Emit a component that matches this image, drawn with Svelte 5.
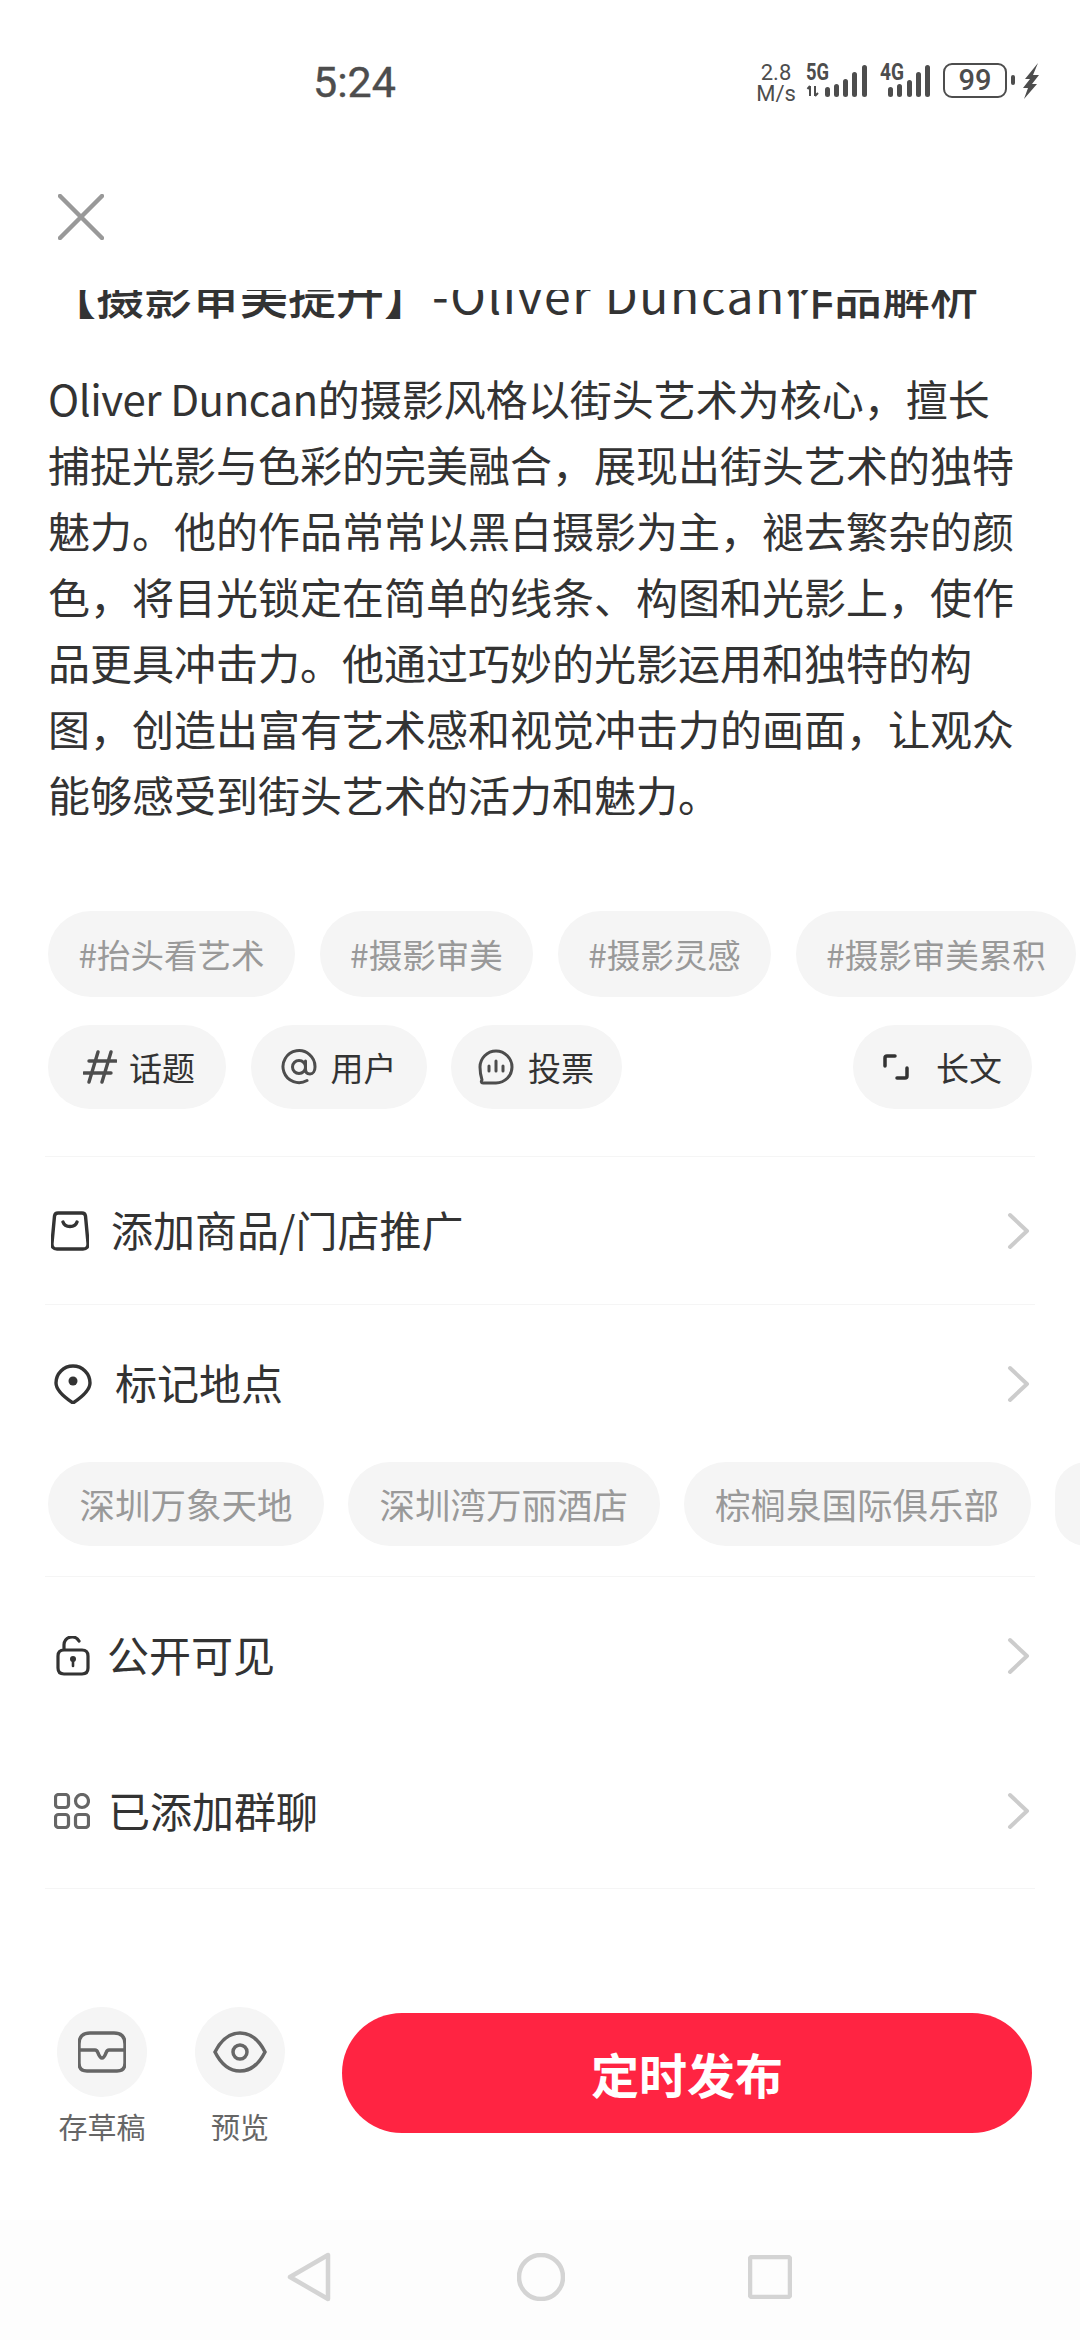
<script>
  const body = '的摄影风格以街头艺术为核心，擅长捕捉光影与色彩的完美融合，展现出街头艺术的独特魅力。他的作品常常以黑白摄影为主，褪去繁杂的颜色，将目光锁定在简单的线条、构图和光影上，使作品更具冲击力。他通过巧妙的光影运用和独特的构图，创造出富有艺术感和视觉冲击力的画面，让观众能够感受到街头艺术的活力和魅力。';
  const tags = ['#抬头看艺术', '#摄影审美', '#摄影灵感', '#摄影审美累积'];
  const places = ['深圳万象天地', '深圳湾万丽酒店', '棕榈泉国际俱乐部'];
</script>

{#snippet chevron()}
  <svg class="chev" viewBox="0 0 26 40" width="26" height="40"><path d="M4 4 L21 20 L4 36" fill="none" stroke="#ccc" stroke-width="4" stroke-linecap="round" stroke-linejoin="round"/></svg>
{/snippet}

<div class="app">
  <div class="status">
    <span class="time">5:24</span>
    <div class="indicators">
      <div class="speed"><span>2.8</span><span>M/s</span></div>
      <svg width="66" height="42" viewBox="0 -6 66 42" class="sig">
        <text x="0" y="17" class="gen" textLength="23" lengthAdjust="spacingAndGlyphs">5G</text>
        <path d="M4 23v10M4 23l-2.500 3M9 33V23M9 33l3-3" stroke="#4d4d4d" stroke-width="2" fill="none"/>
        <g fill="#4d4d4d">
          <rect x="19" y="24" width="5" height="10" rx="2.500"/>
          <rect x="28" y="21" width="5" height="13" rx="2.500"/>
          <rect x="37" y="16" width="5" height="18" rx="2.500"/>
          <rect x="46" y="9" width="5" height="25" rx="2.500"/>
          <rect x="56" y="2" width="5" height="32" rx="2.500"/>
        </g>
      </svg>
      <svg width="52" height="42" viewBox="0 -6 52 42" class="sig">
        <text x="0" y="17" class="gen" textLength="24" lengthAdjust="spacingAndGlyphs">4G</text>
        <g fill="#4d4d4d">
          <rect x="8" y="24" width="5" height="10" rx="2.500"/>
          <rect x="17" y="21" width="5" height="13" rx="2.500"/>
          <rect x="27" y="17" width="5" height="17" rx="2.500"/>
          <rect x="36" y="9" width="5" height="25" rx="2.500"/>
          <rect x="45" y="2" width="5" height="32" rx="2.500"/>
        </g>
      </svg>
      <div class="battery"><span>99</span></div>
      <span class="nub"></span>
      <svg width="16" height="36" viewBox="0 0 16 36" class="bolt"><path d="M15 0 L2 16 L7 16 L0 25 L5 25 L1 36 L14 21 L9 21 L16 12 L10 12 Z" fill="#4d4d4d"/></svg>
    </div>
  </div>

  <div class="header">
    <svg width="46" height="46" viewBox="0 0 46 46"><path d="M2 2 L44 44 M44 2 L2 44" stroke="#999" stroke-width="4.500" stroke-linecap="round"/></svg>
  </div>

  <div class="title-clip"><div class="title">【摄影审美提升】<span class="lat">-Oliver Duncan</span>作品解析</div></div>
  <p class="body"><span class="blat">Oliver Duncan</span>{body}</p>

  <div class="pills tags">
    {#each tags as t}<span class="pill tag">{t}</span>{/each}
  </div>

  <div class="pills tools">
    <span class="pill tool topic">
      <svg width="34" height="34" viewBox="0 0 34 34"><path d="M15 2 L6 32 M28 2 L19 32 M6 11 H33 M1 23 H28" stroke="#4d4d4d" stroke-width="3.400" fill="none" stroke-linecap="round"/></svg>
      话题
    </span>
    <span class="pill tool user">
      <svg width="36" height="36" viewBox="0 0 36 36"><path d="M26 31.500 A16 16 0 1 1 34 18 C34 22 32 25 29 25 C26 25 24.500 23 24.500 20 V12 M24.500 18 A6.500 6.500 0 1 1 11.500 18 A6.500 6.500 0 1 1 24.500 18" stroke="#4d4d4d" stroke-width="3" fill="none" stroke-linecap="round"/></svg>
      用户
    </span>
    <span class="pill tool vote">
      <svg width="36" height="36" viewBox="0 0 36 36"><path d="M18 2 A16 16 0 0 1 18 34 H5 C3 34 3 32 4 31 C2.800 27 2 22 2 18 A16 16 0 0 1 18 2 Z" stroke="#4d4d4d" stroke-width="3" fill="none" stroke-linejoin="round"/><path d="M11 17v5M18 12v10M25 17v5" stroke="#4d4d4d" stroke-width="3" stroke-linecap="round"/></svg>
      投票
    </span>
    <span class="pill tool long">
      <svg width="26" height="26" viewBox="0 0 26 26"><path d="M2 12 V4 Q2 2 4 2 H12 M24 14 V22 Q24 24 22 24 H14" stroke="#333" stroke-width="3.500" fill="none" stroke-linecap="round"/></svg>
      长文
    </span>
  </div>

  <div class="section">
    <div class="row r1">
      <svg class="ric" width="38" height="40" viewBox="0 0 38 40"><path d="M7 2 H31 Q34 2 34.500 5 L37 32 Q37.500 38 32 38 H6 Q0.500 38 1 32 L3.500 5 Q4 2 7 2 Z M12 11 C14 17 24 17 26 11" stroke="#333" stroke-width="3.400" fill="none" stroke-linecap="round"/></svg>
      <span class="label">添加商品/门店推广</span>
      {@render chevron()}
    </div>
    <div class="row r2">
      <svg class="ric" width="38" height="40" viewBox="0 0 38 40"><path d="M19 2 A17 17 0 0 1 36 19 C36 26 28 33 19 39 C10 33 2 26 2 19 A17 17 0 0 1 19 2 Z" stroke="#333" stroke-width="3.400" fill="none" stroke-linejoin="round"/><circle cx="19" cy="17" r="4.500" fill="#333"/></svg>
      <span class="label">标记地点</span>
      {@render chevron()}
    </div>
    <div class="pills places">
      {#each places as p}<span class="pill place">{p}</span>{/each}
      <span class="pill place stub"></span>
    </div>
    <div class="row r3">
      <svg class="ric" width="34" height="40" viewBox="0 0 34 40"><path d="M8 14 V9 A8 8 0 0 1 23 5 M8 14 H26 Q32 14 32 20 V32 Q32 38 26 38 H8 Q2 38 2 32 V20 Q2 14 8 14 Z" stroke="#333" stroke-width="3.200" fill="none" stroke-linecap="round"/><circle cx="17" cy="23" r="3" fill="#333"/><path d="M17 24v6" stroke="#333" stroke-width="2.600" stroke-linecap="round"/></svg>
      <span class="label">公开可见</span>
      {@render chevron()}
    </div>
    <div class="row r4">
      <svg class="ric" width="36" height="36" viewBox="0 0 36 36"><g stroke="#666" stroke-width="3.200" fill="none"><rect x="1.500" y="1.500" width="13" height="13" rx="3"/><circle cx="28" cy="8" r="6.500"/><rect x="1.500" y="21.500" width="13" height="13" rx="3"/><rect x="21.500" y="21.500" width="13" height="13" rx="3"/></g></svg>
      <span class="label">已添加群聊</span>
      {@render chevron()}
    </div>
  </div>

  <div class="actions">
    <div class="action a1">
      <span class="circle"><svg width="48" height="42" viewBox="0 0 48 42"><path d="M12 2 H36 Q47 2 47 13 V32 Q47 40 39 40 H9 Q1 40 1 32 V13 Q1 2 12 2 Z M1 19 H17 Q19 19 20 22 Q22 27 24 27 Q26 27 28 22 Q29 19 31 19 H47" stroke="#666" stroke-width="3.400" fill="none" stroke-linejoin="round"/></svg></span>
      <span class="alabel">存草稿</span>
    </div>
    <div class="action a2">
      <span class="circle"><svg width="54" height="42" viewBox="0 0 54 42"><path d="M2 21 C8 9 17 2 27 2 C37 2 46 9 52 21 C46 33 37 40 27 40 C17 40 8 33 2 21 Z" stroke="#666" stroke-width="3.500" fill="none"/><circle cx="27" cy="21" r="7" stroke="#666" stroke-width="3.500" fill="none"/></svg></span>
      <span class="alabel">预览</span>
    </div>
    <div class="publish">定时发布</div>
  </div>

  <div class="nav">
    <svg width="44" height="50" viewBox="0 0 44 50"><path d="M41 3 V47 L3 25 Z" stroke="#d4d4d4" stroke-width="4.500" fill="none" stroke-linejoin="round"/></svg>
    <svg width="48" height="48" viewBox="0 0 48 48"><circle cx="24" cy="24" r="22" stroke="#d4d4d4" stroke-width="4.500" fill="none"/></svg>
    <svg width="44" height="44" viewBox="0 0 44 44"><rect x="2" y="2" width="40" height="40" rx="2" stroke="#d4d4d4" stroke-width="4.500" fill="none"/></svg>
  </div>
</div>

<style>
  :global(body) { margin: 0; background: #fff; }
  .app {
    width: 1080px; height: 2340px; display: flex; flex-direction: column;
    overflow: hidden; background: #fff; color: #333;
    font-family: "Noto Sans CJK SC", "Noto Sans", sans-serif;
  }
  .status { height: 160px; flex: none; position: relative; }
  .time {
    position: absolute; left: 313px; top: 56px;
    font: 400 43px/52px Roboto, sans-serif; color: #4d4d4d; -webkit-text-stroke: 0.4px #4d4d4d;
  }
  .indicators {
    position: absolute; left: 755px; top: 60px; display: flex; align-items: flex-start;
  }
  .speed {
    width: 42px; display: flex; flex-direction: column; align-items: center;
    font: 400 22px/21px Roboto, sans-serif; color: #4d4d4d; margin-top: 2px;
  }
  .sig { margin-top: -3px; }
  .sig:nth-of-type(1) { margin-left: 9px; }
  .sig:nth-of-type(2) { margin-left: 8px; }
  .gen { font: 700 23px Roboto, sans-serif; fill: #4d4d4d; }
  .battery {
    margin-left: 11px; margin-top: 3px; width: 64px; height: 35px; box-sizing: border-box;
    border: 2.500px solid #4d4d4d; border-radius: 9px; display: flex;
    align-items: center; justify-content: center;
    font: 500 29px/1 Roboto, sans-serif; color: #4d4d4d;
  }
  .nub { width: 4px; height: 10px; background: #4d4d4d; border-radius: 2px; margin: 15px 8px 0 4px; }
  .bolt { margin-top: 3px; }

  .header { height: 130px; flex: none; padding-left: 58px; box-sizing: border-box; padding-top: 34px; }
  .header svg { display: block; }

  .title-clip { height: 75px; flex: none; overflow: hidden; padding: 0 48px; }
  .title {
    margin-top: -27px; font-size: 48px; line-height: 60px; font-weight: 500; white-space: nowrap; color: #333;
  }
  .lat { font-weight: 400; letter-spacing: 1.600px; }
  .body { margin: 0; padding: 0 56px 0 48px; font-size: 42px; line-height: 66px; color: #333; }
  .blat { letter-spacing: -0.450px; }

  .pills { display: flex; flex: none; gap: 24.5px; white-space: nowrap; }
  .pill { background: #f5f5f5; border-radius: 44px; display: flex; align-items: center; box-sizing: border-box; flex: none; }
  .tags { margin-top: 84px; padding-left: 48px; }
  .tag { height: 86px; padding: 0 30.500px 2px; font-size: 33.500px; color: #999; }
  .tools { margin-top: 28px; padding: 0 48px; }
  .tool { height: 84px; font-size: 33px; color: #333; padding-bottom: 1px; }
  .topic { width: 178px; padding-left: 35px; gap: 12px; }
  .user { width: 176px; padding-left: 30px; gap: 14px; }
  .vote { width: 171px; padding-left: 27px; gap: 14px; }
  .long { width: 179px; margin-left: auto; padding-left: 30px; gap: 27px; }

  .section {
    margin: 47px 45px 0; display: flex; flex-direction: column;
    border-top: 1px solid #f5f5f5;
  }
  .row { display: flex; align-items: center; flex: none; }
  .label { font-size: 42px; color: #333; line-height: 60px; margin-bottom: 3px; }
  .chev { margin-left: auto; margin-right: 3px; }
  .r1 { height: 147px; border-bottom: 1px solid #f5f5f5; padding-left: 6px; }
  .r1 .label { margin-left: 22px; }
  .r2 { height: 157px; padding-left: 9px; }
  .r2 .label { margin-left: 23px; }
  .places {
    gap: 24px; padding: 0 0 30px 3px; border-bottom: 1px solid #f5f5f5; width: 990px; box-sizing: border-box;
  }
  .place { height: 84px; padding: 0 31.500px 2px; font-size: 35.500px; color: #999; }
  .stub { width: 60px; }
  .r3 { height: 157px; padding-left: 11px; }
  .r3 .label { margin-left: 17px; }
  .r4 { height: 154px; padding-left: 9px; border-bottom: 1px solid #f5f5f5; }
  .r4 .label { margin-left: 18px; }

  .actions { flex: none; margin-top: 118px; height: 213px; display: flex; position: relative; }
  .action { position: absolute; top: 0; width: 90px; display: flex; flex-direction: column; align-items: center; }
  .a1 { left: 57px; }
  .a2 { left: 195px; }
  .circle { width: 90px; height: 90px; border-radius: 50%; background: #f5f5f5; display: flex; align-items: center; justify-content: center; flex: none; }
  .alabel { margin-top: 11px; font-size: 29px; line-height: 36px; color: #666; white-space: nowrap; }
  .publish {
    position: absolute; left: 342px; top: 6px; width: 690px; height: 120px; border-radius: 60px;
    background: #ff2442; color: #fff; font-weight: 700; font-size: 48px;
    display: flex; align-items: center; justify-content: center;
  }
  .nav { flex: 1; background: #fdfdfd; position: relative; }
  .nav svg { position: absolute; }
  .nav svg:nth-child(1) { left: 287px; top: 32px; }
  .nav svg:nth-child(2) { left: 517px; top: 33px; }
  .nav svg:nth-child(3) { left: 748px; top: 35px; }
</style>
